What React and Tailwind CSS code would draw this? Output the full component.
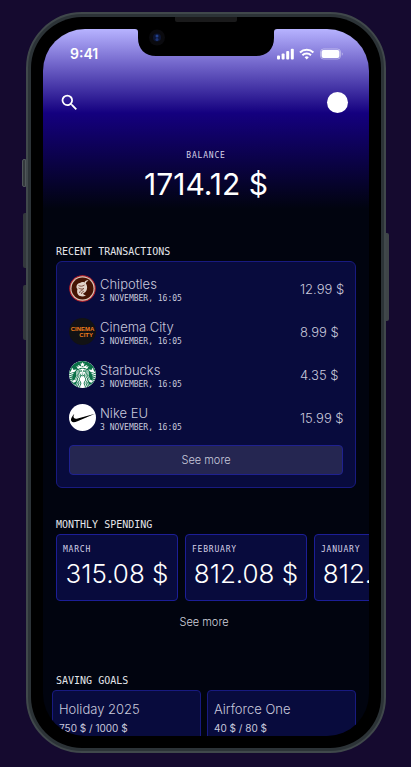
import { MdSearch } from 'react-icons/md';
import { SiNike, SiStarbucks } from 'react-icons/si';

const ChipotleLogo = () => (
  <svg viewBox="0 0 27 27" className="size-full">
    <circle cx="13.5" cy="13.5" r="13.5" fill="#a81f2b" />
    <circle cx="13.5" cy="13.5" r="12.2" fill="#d9c3b4" />
    <circle cx="13.5" cy="13.5" r="11" fill="#451404" />
    <path
      d="M19.500 5.500c-2-.8-3.600.2-4 2-1.500-.9-3.300-.5-4.500.6-1.700.2-3.300 1.500-3.500 3.200-.2 1.300.3 2.200.9 2.700-.6 2.400-.4 4.600 1 6 1.900 1.900 5.300 1.900 7.600.2-1.500 0-2.600-.6-2.900-1.700 2.600-1 4-3.300 4-6 0-1.500-.5-2.900-1.300-3.900.2-1.300 1.100-2.300 2.700-3.100z"
      fill="#e2d3ca"
    />
    <path
      d="M9.500 10.500c1.700 1 4 1 6-.5M9.500 13c1.500 1.300 4 1.300 5.500.3M10.500 18c.5-2 2-3.500 3.800-3.200M12.500 19c0-1.500 1-2.500 2.300-2.500"
      fill="none"
      stroke="#6a3524"
      strokeWidth="0.800"
    />
  </svg>
);

const CinemaCityLogo = () => (
  <span className="flex size-full flex-col items-center justify-center bg-[#121214] font-['Liberation_Sans'] text-[6px] leading-[6px] font-bold text-[#f07c1c]">
    <span>CINEMA</span>
    <span className="self-end pr-[3px]">CITY</span>
  </span>
);

const transactions = [
  { name: 'Chipotles', amount: '12.99 $', logo: <ChipotleLogo /> },
  { name: 'Cinema City', amount: '8.99 $', logo: <CinemaCityLogo /> },
  {
    name: 'Starbucks',
    amount: '4.35 $',
    logo: <SiStarbucks className="size-full bg-white text-[#0b7148]" />,
  },
  {
    name: 'Nike EU',
    amount: '15.99 $',
    logo: (
      <span className="flex size-full items-center justify-center bg-white">
        <SiNike className="size-6 text-black" />
      </span>
    ),
  },
];

const months = [
  { name: 'MARCH', total: '315.08 $' },
  { name: 'FEBRUARY', total: '812.08 $' },
  { name: 'JANUARY', total: '812.08 $' },
];

const goals = [
  { name: 'Holiday 2025', progress: '750 $ / 1000 $' },
  { name: 'Airforce One', progress: '40 $ / 80 $' },
];

const Notch = () => (
  <div className="absolute inset-x-0 top-0 flex justify-center">
    <svg viewBox="0 0 142 28" className="h-7 w-[142px]">
      <path d="M0 0c2 0 3 1 3 3v6c0 11 7 18 18 18h100c11 0 18-7 18-18V3c0-2 1-3 3-3z" />
      <circle cx="22" cy="8.500" r="8" fill="#0a0a0e" />
      <circle cx="22" cy="8.500" r="4" fill="#0d1533" />
      <circle cx="22" cy="7" r="1.500" fill="#22408c" />
      <circle cx="22" cy="10.500" r="1.500" fill="#1d3474" />
    </svg>
  </div>
);

const StatusBar = () => (
  <div className="flex h-4 items-center justify-between pr-[26px] pl-[27px]">
    <span className="text-sm leading-4 font-semibold">9:41</span>
    <svg viewBox="0 0 66 12" className="h-3 w-[66px]" fill="white">
      <rect x="0" y="7.500" width="3" height="4" rx="1" />
      <rect x="4.600" y="5.500" width="3" height="6" rx="1" />
      <rect x="9.200" y="3" width="3" height="8.500" rx="1" />
      <rect x="13.800" y="0.800" width="3" height="10.700" rx="1" />
      <g fill="none" stroke="white" strokeWidth="2">
        <path d="M23 4.500a9.500 9.500 0 0 1 13.400 0" />
        <path d="M25.400 7.300a6.200 6.200 0 0 1 8.600 0" />
      </g>
      <path d="M27.600 9.300a3 3 0 0 1 4.200 0l-2.100 2.200z" />
      <rect x="43.500" y="1" width="20" height="10" rx="3" fill="none" stroke="white" strokeOpacity="0.400" />
      <rect x="44.500" y="2" width="18" height="8" rx="2" />
      <path d="M64.800 4.300v3.400c1.200-.6 1.200-2.800 0-3.400z" fillOpacity="0.500" />
    </svg>
  </div>
);

const SectionTitle = ({ children }) => (
  <h2 className="mb-[3px] font-['DejaVu_Sans_Mono',monospace] text-[10px] leading-3 text-[#e4e4ea]">
    {children}
  </h2>
);

const Transaction = ({ name, amount, logo }) => (
  <li className="flex h-[29px] items-center">
    <span className="size-[27px] shrink-0 self-start overflow-hidden rounded-full">{logo}</span>
    <div className="mt-[2px] ml-1 flex-1">
      <p className="text-[13px] leading-[17px] font-light">{name}</p>
      <p className="font-['DejaVu_Sans_Mono',monospace] text-[8px] leading-3">3 NOVEMBER, 16:05</p>
    </div>
    <span className="w-[43px] text-[13px] font-light whitespace-nowrap">{amount}</span>
  </li>
);

const Screen = () => (
  <main className="relative h-full overflow-hidden rounded-[42px] bg-[#01040f] bg-linear-[180deg,#b7b3ff_0px,#7468cc_34px,#14007f_84px,#01040f_180px] pt-[17px] text-white">
    <Notch />
    <StatusBar />

    <header className="mt-[30px] flex h-[21px] items-center justify-between pr-[21px] pl-4">
      <button aria-label="Search">
        <MdSearch className="size-[21px]" />
      </button>
      <button aria-label="Profile" className="size-[21px] rounded-full bg-white" />
    </header>

    <section className="mt-[37px] text-center">
      <h1 className="font-['DejaVu_Sans_Mono',monospace] text-[8px] leading-3 tracking-widest text-[#d4d0e6]">
        BALANCE
      </h1>
      <p className="mt-1 text-[30px] leading-9">1714.12 $</p>
    </section>

    <section className="mt-11 px-[13px]">
      <SectionTitle>RECENT TRANSACTIONS</SectionTitle>
      <div className="rounded-md border border-[#181a80] bg-[#080b3d] px-3 pt-[13px] pb-3 text-[#c8c9dc]">
        <ul className="flex flex-col gap-[14px]">
          {transactions.map((t) => (
            <Transaction key={t.name} {...t} />
          ))}
        </ul>
        <button className="mt-3 h-[30px] w-full rounded-sm border border-[#1f2190] bg-[#252651] text-[11px] font-light">
          See more
        </button>
      </div>
    </section>

    <section className="mt-[31px] pl-[13px]">
      <SectionTitle>MONTHLY SPENDING</SectionTitle>
      <div className="flex gap-[7px] overflow-x-auto [scrollbar-width:none]">
        {months.map((month) => (
          <div
            key={month.name}
            className="h-[67px] w-[122px] shrink-0 rounded-sm border border-[#1c1e96] bg-[#080b3d] px-[6px] pt-[9px]"
          >
            <p className="font-['DejaVu_Sans_Mono',monospace] text-[8px] leading-3 tracking-widest text-[#d4d0e6]">
              {month.name}
            </p>
            <p className="mt-[2px] text-center text-[26px] leading-8 font-light whitespace-nowrap">
              {month.total}
            </p>
          </div>
        ))}
      </div>
      <button className="mt-[13px] block w-full pr-[17px] text-center text-[11px] leading-4 font-light text-[#d0d1dc]">
        See more
      </button>
    </section>

    <section className="mt-[45px] pr-[13px] pl-[9px]">
      <div className="pl-1">
        <SectionTitle>SAVING GOALS</SectionTitle>
      </div>
      <div className="grid grid-cols-2 gap-[6px]">
        {goals.map((goal) => (
          <div
            key={goal.name}
            className="rounded-sm border border-[#181a80] bg-[#080b3d] px-[6px] pt-[10px] pb-4 text-[#c8c9dc]"
          >
            <p className="text-[13px] leading-[17px] font-light">{goal.name}</p>
            <p className="mt-1 text-[10px] leading-3">{goal.progress}</p>
          </div>
        ))}
      </div>
    </section>
  </main>
);

export default function App() {
  return (
    <div className="h-screen bg-[#150a2f] pt-3 pr-[25px] pb-[14px] pl-[26px] font-['Inter',sans-serif]">
      <div className="relative mx-auto h-full max-w-sm">
        {/* side buttons */}
        <span className="absolute top-[147px] -left-1 h-7 w-1 rounded-l-xs border border-[#50575a] bg-[#33393c]" />
        <span className="absolute top-[201px] -left-[3px] h-[55px] w-[3px] rounded-l-xs bg-[#33383c]" />
        <span className="absolute top-[273px] -left-[3px] h-[55px] w-[3px] rounded-l-xs bg-[#33383c]" />
        <span className="absolute top-[221px] -right-[3px] h-[88px] w-[3px] rounded-r-xs bg-[#3f4548]" />

        <div className="relative h-full rounded-[56px] border-2 border-[#40484b] bg-[#2c3337] p-[3px]">
          <div className="relative h-full rounded-[51px] bg-black p-3">
            <span className="absolute top-0 left-1/2 h-[5px] w-[62px] -translate-x-1/2 rounded-b-xs bg-[#1a1a1b]" />
            <Screen />
          </div>
        </div>
      </div>
    </div>
  );
}
